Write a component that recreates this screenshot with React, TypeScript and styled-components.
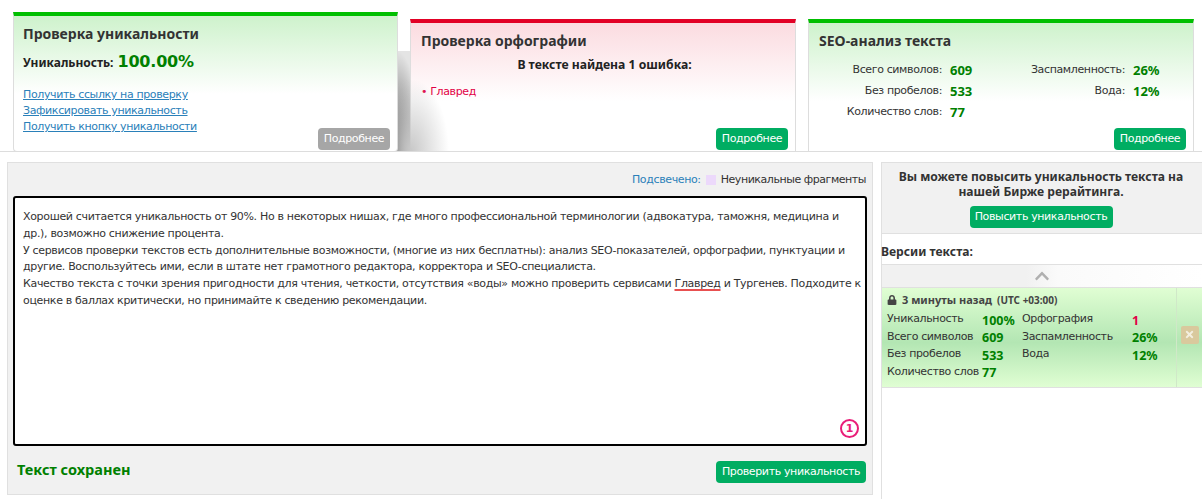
import styled, { createGlobalStyle } from "styled-components"
import { FaLock, FaChevronUp, FaTimes } from "react-icons/fa"

const GlobalStyle = createGlobalStyle`
  html, body {
    margin: 0;
    padding: 0;
    background: #fff;
  }
  body {
    font-family: "DejaVu Sans", Tahoma, sans-serif;
    font-size: 11px;
    letter-spacing: -0.37px;
    color: #333;
  }
`

const boldFont = `"Noto Sans", Tahoma, sans-serif`

const Page = styled.div`
  width: 1202px;
  height: 499px;
  overflow: hidden;
  position: relative;
`

const Tabs = styled.div`
  display: flex;
  align-items: flex-end;
  gap: 12px;
  height: 152px;
  padding-left: 13px;
  box-sizing: border-box;
  border-bottom: 1px solid #ddd;
`

const Card = styled.div<{ $tone: "green" | "red"; $active?: boolean }>`
  position: relative;
  box-sizing: border-box;
  width: ${(p) => (p.$active ? "385px" : "386px")};
  height: ${(p) => (p.$active ? "140px" : "132px")};
  margin-bottom: ${(p) => (p.$active ? "-1px" : "0")};
  padding: 9px 7px 1px ${(p) => (p.$active ? "9px" : "10px")};
  display: flex;
  flex-direction: column;
  border-top: 4px solid ${(p) => (p.$tone === "red" ? "#e20025" : "#00bf00")};
  border-left: 1px solid #ddd;
  border-right: 1px solid #ddd;
  border-bottom: ${(p) => (p.$active ? "1px solid #ddd" : "0")};
  border-bottom-left-radius: ${(p) => (p.$active ? "4px" : "0")};
  border-bottom-right-radius: ${(p) => (p.$active ? "4px" : "0")};
  background: linear-gradient(
    to bottom,
    ${(p) => (p.$tone === "red" ? "#fbdbe0" : "#cef2cc")} 0,
    #ffffff 78px
  );
  z-index: ${(p) => (p.$active ? 2 : 1)};
`

/* the dark fold between the raised tab and its neighbour */
const CornerShadow = styled.div`
  position: absolute;
  left: -14px;
  bottom: 0;
  width: 60px;
  height: 100px;
  background-image:
    radial-gradient(ellipse 38px 72px at 14px 100%, #c8c8c8 0, rgba(255, 255, 255, 0) 100%),
    radial-gradient(ellipse 24px 100px at 0 100%, #555 0, #a0a0a0 50%, #e4e4e4 100%);
  background-size: 100% 100%, 13px 100%;
  background-repeat: no-repeat;
  pointer-events: none;
`

const CardTitle = styled.h2`
  margin: 0;
  font-family: ${boldFont};
  font-size: 14px;
  line-height: 18px;
  font-weight: 700;
  letter-spacing: 0;
  color: #333;
`

const UniqueRow = styled.div`
  display: flex;
  align-items: baseline;
  gap: 4px;
  margin-top: 9px;
  font-family: ${boldFont};
  font-size: 12px;
  font-weight: 700;
  letter-spacing: 0;
  color: #222;
`

const UniqueValue = styled.span`
  font-family: "DejaVu Sans", Tahoma, sans-serif;
  font-size: 16px;
  letter-spacing: -0.2px;
  color: #008000;
`

const CardFoot = styled.div`
  margin-top: auto;
  display: flex;
  justify-content: space-between;
  align-items: flex-end;
`

const Links = styled.div`
  display: flex;
  flex-direction: column;
  padding-bottom: 15px;
`

const Link = styled.a`
  line-height: 16px;
  color: #2a80b9;
  text-decoration: underline;
`

const Button = styled.button<{ $muted?: boolean; $wide?: number }>`
  width: ${(p) => p.$wide ?? 72}px;
  height: 22px;
  padding: 0;
  border: 0;
  border-radius: 4px;
  background: ${(p) => (p.$muted ? "#a6a6a6" : "#00ad62")};
  color: #fff;
  font-family: inherit;
  font-size: 11px;
  letter-spacing: inherit;
  line-height: 22px;
  white-space: nowrap;
`

const ErrorsHead = styled.div`
  margin-top: 6px;
  text-align: center;
  font-family: ${boldFont};
  font-size: 12.2px;
  font-weight: 700;
  letter-spacing: 0;
  color: #222;
`

const ErrorItem = styled.div`
  margin-top: 10px;
  color: #e20045;
  line-height: 18px;
`

const SeoGrid = styled.div`
  display: grid;
  grid-template-columns: 123px 60px 107px 40px;
  column-gap: 8px;
  grid-auto-rows: 21px;
  margin-top: 9px;
  align-items: center;
`

const SeoLabel = styled.span`
  text-align: right;
  color: #333;
`

const SeoValue = styled.span`
  font-family: ${boldFont};
  font-size: 13px;
  font-weight: 700;
  letter-spacing: 0;
  color: #008000;
`

const Content = styled.div`
  display: flex;
  gap: 8px;
  margin-top: 10px;
  padding-left: 7px;
`

const Main = styled.div`
  box-sizing: border-box;
  width: 866px;
  height: 333px;
  padding: 0 5px;
  background: #f1f1f1;
  border: 1px solid #e0e0e0;
  display: flex;
  flex-direction: column;
`

const Legend = styled.div`
  height: 33px;
  padding-right: 1px;
  display: flex;
  justify-content: flex-end;
  align-items: center;
  gap: 4px;
  letter-spacing: -0.45px;
  color: #333;
`

const LegendKey = styled.span`
  color: #2a80b9;
  letter-spacing: -0.37px;
`

const Swatch = styled.i`
  display: block;
  width: 10px;
  height: 10px;
  background: #ecd9fb;
  margin: 0 1px;
`

const Editor = styled.div`
  position: relative;
  box-sizing: border-box;
  width: 854px;
  height: 250px;
  padding: 11px 3px 7px 8px;
  background: #fff;
  border: 2px solid #000;
  border-radius: 3px;
  letter-spacing: -0.33px;
  line-height: 16.8px;
  color: #333;
`

const Marked = styled.span`
  text-decoration: underline;
  text-decoration-color: #e85050;
  text-decoration-thickness: 2px;
  text-underline-offset: 2px;
`

const Counter = styled.span`
  position: absolute;
  right: 6px;
  bottom: 6px;
  box-sizing: border-box;
  width: 19px;
  height: 19px;
  border: 2px solid #e91e78;
  border-radius: 50%;
  color: #e91e78;
  font-size: 11px;
  font-weight: 700;
  letter-spacing: 0;
  line-height: 15px;
  text-align: center;
`

const MainFoot = styled.div`
  display: flex;
  justify-content: space-between;
  align-items: flex-start;
  padding: 15px 1px 0 4px;
`

const Saved = styled.div`
  margin-top: -2px;
  font-family: ${boldFont};
  font-size: 14.5px;
  font-weight: 700;
  letter-spacing: 0;
  line-height: 20px;
  color: #008000;
`

const Side = styled.div`
  flex: 1;
  height: 340px;
  display: flex;
  flex-direction: column;
  border-left: 1px solid #e0e0e0;
`

const Promo = styled.div`
  box-sizing: border-box;
  height: 72px;
  padding: 6px 6px 0 4px;
  margin-left: -1px;
  background: #f1f1f1;
  border: 1px solid #e0e0e0;
  border-right: 0;
  text-align: center;
  font-family: ${boldFont};
  font-size: 12.1px;
  font-weight: 700;
  letter-spacing: 0;
  line-height: 15px;
  color: #333;
`

const PromoButton = styled(Button)`
  display: block;
  margin: 7px auto 0;
  font-family: "DejaVu Sans", Tahoma, sans-serif;
  font-weight: 400;
  letter-spacing: -0.37px;
`

const VersionsTitle = styled.div`
  margin: 9px 0 0 -1px;
  height: 21px;
  font-family: ${boldFont};
  font-size: 12.1px;
  font-weight: 700;
  letter-spacing: 0;
  line-height: 18px;
  color: #333;
`

const Scroller = styled.div`
  box-sizing: border-box;
  height: 24px;
  display: flex;
  justify-content: center;
  align-items: center;
  border-top: 1px solid #e0e0e0;
  border-bottom: 1px solid #e0e0e0;
  background: linear-gradient(to right, #f1f1f1 0, #f1f1f1 45%, #fafafa 55%, #fff 100%);
  color: #b0b0b0;
  font-size: 16px;
`

const Version = styled.div`
  box-sizing: border-box;
  height: 100px;
  display: flex;
  border-bottom: 1px solid #e0e0e0;
  background: linear-gradient(to bottom, #e0fed3 0, #b3e6b3 55%, #e0fed3 100%);
`

const VersionBody = styled.div`
  flex: 1;
  padding: 5px 0 0 5px;
  border-right: 1px solid #d0e8c8;
`

const VersionHead = styled.div`
  display: flex;
  align-items: center;
  gap: 5px;
  height: 13px;
  font-family: ${boldFont};
  font-size: 11px;
  font-weight: 700;
  letter-spacing: 0;
  color: #444;
`

const VersionZone = styled.span`
  font-size: 10px;
`

const VersionGrid = styled.div`
  display: grid;
  grid-template-columns: 95px 40px 110px 40px;
  grid-auto-rows: 17.5px;
  margin-top: 4px;
  align-items: center;
`

const VersionLabel = styled.span`
  color: #333;
  white-space: nowrap;
`

const VersionValue = styled.span<{ $bad?: boolean }>`
  margin-top: 3px;
  font-family: ${boldFont};
  font-size: 12.5px;
  font-weight: 700;
  letter-spacing: 0;
  color: ${(p) => (p.$bad ? "#e20045" : "#008000")};
`

const VersionTools = styled.div`
  width: 25px;
  display: flex;
  justify-content: center;
  align-items: center;
`

const DeleteButton = styled.span`
  width: 18px;
  height: 18px;
  margin-bottom: 6px;
  display: flex;
  justify-content: center;
  align-items: center;
  border-radius: 2px;
  background: #d9c99d;
  color: #f3efe0;
  font-size: 11px;
`

export default function App() {
  return (
    <Page>
      <GlobalStyle />
      <Tabs>
        <Card $tone="green" $active>
          <CardTitle>Проверка уникальности</CardTitle>
          <UniqueRow>
            Уникальность: <UniqueValue>100.00%</UniqueValue>
          </UniqueRow>
          <CardFoot>
            <Links>
              <Link>Получить ссылку на проверку</Link>
              <Link>Зафиксировать уникальность</Link>
              <Link>Получить кнопку уникальности</Link>
            </Links>
            <Button $muted>Подробнее</Button>
          </CardFoot>
        </Card>
        <Card $tone="red">
          <CornerShadow />
          <CardTitle>Проверка орфографии</CardTitle>
          <ErrorsHead>В тексте найдена 1 ошибка:</ErrorsHead>
          <ErrorItem>• Главред</ErrorItem>
          <CardFoot>
            <span />
            <Button>Подробнее</Button>
          </CardFoot>
        </Card>
        <Card $tone="green">
          <CardTitle>SEO-анализ текста</CardTitle>
          <SeoGrid>
            <SeoLabel>Всего символов:</SeoLabel>
            <SeoValue>609</SeoValue>
            <SeoLabel>Заспамленность:</SeoLabel>
            <SeoValue>26%</SeoValue>
            <SeoLabel>Без пробелов:</SeoLabel>
            <SeoValue>533</SeoValue>
            <SeoLabel>Вода:</SeoLabel>
            <SeoValue>12%</SeoValue>
            <SeoLabel>Количество слов:</SeoLabel>
            <SeoValue>77</SeoValue>
          </SeoGrid>
          <CardFoot>
            <span />
            <Button>Подробнее</Button>
          </CardFoot>
        </Card>
      </Tabs>

      <Content>
        <Main>
          <Legend>
            <LegendKey>Подсвечено:</LegendKey>
            <Swatch />
            Неуникальные фрагменты
          </Legend>
          <Editor>
            Хорошей считается уникальность от 90%. Но в некоторых нишах, где много профессиональной терминологии (адвокатура, таможня, медицина и др.), возможно снижение процента.
            <br />
            У сервисов проверки текстов есть дополнительные возможности, (многие из них бесплатны): анализ SEO-показателей, орфографии, пунктуации и другие. Воспользуйтесь ими, если в штате нет грамотного редактора, корректора и SEO-специалиста.
            <br />
            Качество текста с точки зрения пригодности для чтения, четкости, отсутствия «воды» можно проверить сервисами <Marked>Главред</Marked> и Тургенев. Подходите к оценке в баллах критически, но принимайте к сведению рекомендации.
            <Counter>1</Counter>
          </Editor>
          <MainFoot>
            <Saved>Текст сохранен</Saved>
            <Button $wide={150}>Проверить уникальность</Button>
          </MainFoot>
        </Main>

        <Side>
          <Promo>
            Вы можете повысить уникальность текста на нашей Бирже рерайтинга.
            <PromoButton $wide={143}>Повысить уникальность</PromoButton>
          </Promo>
          <VersionsTitle>Версии текста:</VersionsTitle>
          <Scroller>
            <FaChevronUp />
          </Scroller>
          <Version>
            <VersionBody>
              <VersionHead>
                <FaLock size={10} />
                3 минуты назад <VersionZone>(UTC +03:00)</VersionZone>
              </VersionHead>
              <VersionGrid>
                <VersionLabel>Уникальность</VersionLabel>
                <VersionValue>100%</VersionValue>
                <VersionLabel>Орфография</VersionLabel>
                <VersionValue $bad>1</VersionValue>
                <VersionLabel>Всего символов</VersionLabel>
                <VersionValue>609</VersionValue>
                <VersionLabel>Заспамленность</VersionLabel>
                <VersionValue>26%</VersionValue>
                <VersionLabel>Без пробелов</VersionLabel>
                <VersionValue>533</VersionValue>
                <VersionLabel>Вода</VersionLabel>
                <VersionValue>12%</VersionValue>
                <VersionLabel>Количество слов</VersionLabel>
                <VersionValue>77</VersionValue>
              </VersionGrid>
            </VersionBody>
            <VersionTools>
              <DeleteButton>
                <FaTimes />
              </DeleteButton>
            </VersionTools>
          </Version>
        </Side>
      </Content>
    </Page>
  )
}
